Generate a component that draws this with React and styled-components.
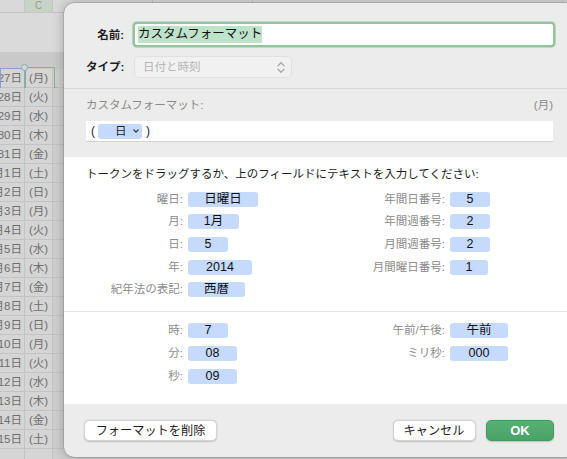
import React from "react";
import styled, { createGlobalStyle } from "styled-components";

const GlobalStyle = createGlobalStyle`
  html, body { margin: 0; padding: 0; width: 567px; height: 459px; overflow: hidden; }
  body { font-family: "Liberation Sans", "Noto Sans CJK JP", sans-serif; }
  * { box-sizing: border-box; }
`;

const Screen = styled.div`
  position: relative;
  width: 567px;
  height: 459px;
  overflow: hidden;
  background: #d4d4d4;
`;

/* ---------- spreadsheet behind ---------- */
const Sheet = styled.div`
  display: flex;
  flex-direction: column;
  width: 100%;
`;

const ColumnHeader = styled.div`
  display: flex;
  height: 13px;
  background: #d9d9d9;
  border-bottom: 1px solid #c6c6c6;
`;

const HeaderCell = styled.div`
  width: ${(p) => p.$w}px;
  flex: ${(p) => (p.$grow ? 1 : "none")};
  height: 100%;
  border-right: 1px solid #c6c6c6;
  background: ${(p) => (p.$active ? "#c8d3c8" : "transparent")};
  color: #909c90;
  font-size: 10px;
  line-height: 12px;
  text-align: center;
`;

const FormulaArea = styled.div`
  height: 39px;
  background: #dadada;
`;

const SheetBand = styled.div`
  height: 17px;
  background: #c9c9c9;
`;

const SheetRow = styled.div`
  position: relative;
  display: flex;
  height: 19px;
  border-bottom: 1px solid #c3c3c3;
  background: #d5d5d5;
`;

const DateCell = styled.div`
  width: 25px;
  height: 100%;
  border-right: 1px solid #c3c3c3;
  display: flex;
  justify-content: flex-end;
  align-items: center;
  overflow: hidden;
  padding-right: 2px;
  white-space: nowrap;
  color: #6e6e6e;
  font-size: 11.5px;
  line-height: 14px;
`;

const DayCell = styled.div`
  width: 28px;
  height: 100%;
  border-right: 1px solid #c3c3c3;
  display: flex;
  justify-content: center;
  align-items: center;
  color: #6e6e6e;
  font-size: 11.5px;
  line-height: 14px;
  white-space: nowrap;
`;

const RestCell = styled.div`
  flex: 1;
  background: #cfcfcf;
`;

const BlueFrame = styled.div`
  position: absolute;
  left: 0;
  top: -1px;
  width: 26px;
  height: 21px;
  border: 1.5px solid #8c9cd6;
  pointer-events: none;
`;

const GreenFrame = styled.div`
  position: absolute;
  left: 24px;
  top: -2px;
  width: 31px;
  height: 23px;
  border: 1.5px solid #86b686;
  pointer-events: none;
`;

const Handle = styled.span`
  position: absolute;
  width: 7px;
  height: 7px;
  border-radius: 50%;
  background: #d6d6d6;
  border: 1.3px solid #86b686;
  ${(p) => (p.$end ? "right: -4.5px; bottom: -4.5px;" : "left: -4.5px; top: -4.5px;")}
`;

/* ---------- dialog ---------- */
const Dialog = styled.div`
  position: absolute;
  left: 64px;
  top: 3px;
  width: 511px;
  height: 454px;
  border-radius: 10px;
  overflow: hidden;
  background: #ececec;
  box-shadow: 0 0 12px rgba(0, 0, 0, 0.28), 0 0 0 0.5px rgba(0, 0, 0, 0.2);
  display: flex;
  flex-direction: column;
  color: #1d1d1d;
`;

const TopSection = styled.div`
  padding: 21px 22px 10px 22px;
  display: flex;
  flex-direction: column;
  gap: 11px;
`;

const FormRow = styled.div`
  display: grid;
  grid-template-columns: 38px 1fr;
  column-gap: 11px;
  align-items: center;
`;

const FormLabel = styled.div`
  text-align: right;
  font-weight: bold;
  font-size: 11.5px;
  line-height: 14px;
  white-space: nowrap;
  color: #1f1f1f;
`;

const NameInput = styled.div`
  height: 21px;
  background: #fff;
  border-radius: 2px;
  box-shadow: 0 0 0 2.6px #93c59c;
  padding-left: 3px;
  display: flex;
  align-items: center;
`;

const Selected = styled.span`
  background: #bfe2cb;
  font-size: 12.5px;
  line-height: 16.5px;
  color: #111;
`;

const Popup = styled.div`
  width: 158px;
  height: 22px;
  margin-left: -1px;
  border-radius: 5px;
  background: #f1f1f1;
  border: 1px solid #e0e0e0;
  padding: 0 6px 0 8px;
  display: flex;
  align-items: center;
  justify-content: space-between;
  color: #b6b6b6;
  font-size: 11.5px;
  line-height: 14px;
`;

const Divider = styled.div`
  height: 1px;
  background: ${(p) => p.$color || "#d7d7d7"};
  flex: none;
`;

const CustomSection = styled.div`
  padding: 9px 22px 15px 22px;
  display: flex;
  flex-direction: column;
  gap: 9px;
`;

const CaptionLine = styled.div`
  display: flex;
  justify-content: space-between;
  font-size: 11.5px;
  line-height: 14px;
  color: #8a8a8a;
`;

const FormatField = styled.div`
  height: 21px;
  background: #fff;
  border-bottom: 1px solid #d3d3d3;
  display: flex;
  align-items: center;
  padding-left: 5px;
  font-size: 12px;
  line-height: 14px;
  color: #222;
`;

const FieldToken = styled.span`
  width: 44px;
  height: 15px;
  margin: 0 4px 0 3px;
  border-radius: 3px;
  background: #c4dafc;
  display: flex;
  align-items: center;
  gap: 6px;
  padding-left: 17px;
  font-size: 11.5px;
  color: #222;
`;

const WhiteSection = styled.div`
  background: #fff;
  display: flex;
  flex-direction: column;
  padding-bottom: 20px;
`;

const Instruction = styled.div`
  padding: 10px 22px 0 22px;
  font-size: 11.5px;
  line-height: 14px;
  color: #1d1d1d;
  white-space: nowrap;
`;

const TokenGrid = styled.div`
  margin-top: ${(p) => p.$top}px;
  padding-left: 22px;
  display: grid;
  grid-template-columns: 97px 150px 102px auto;
  column-gap: 5px;
  row-gap: 7.7px;
  grid-auto-rows: 15px;
  align-items: center;
`;

const TokenLabel = styled.div`
  text-align: right;
  font-size: 11.5px;
  line-height: 15px;
  color: #8b8b8b;
  white-space: nowrap;
`;

const Token = styled.div`
  justify-self: start;
  width: ${(p) => p.$w}px;
  height: 15px;
  border-radius: 3px;
  background: #c5dafc;
  text-align: center;
  font-size: 12.5px;
  line-height: 15px;
  color: #111;
  white-space: nowrap;
`;

const Spacer = styled.div``;

const Footer = styled.div`
  flex: 1;
  padding: 16.5px 21px 0 20px;
  display: flex;
  align-items: flex-start;
  gap: 10.5px;
`;

const Button = styled.button`
  height: 21px;
  width: ${(p) => p.$w}px;
  margin-right: ${(p) => (p.$push ? "auto" : "0")};
  border-radius: 5px;
  border: 0.5px solid ${(p) => (p.$primary ? "#3f9a5c" : "#d2d2d2")};
  background: ${(p) => (p.$primary ? "linear-gradient(#57b074, #4aa268)" : "#fff")};
  box-shadow: 0 0.5px 1.5px rgba(0, 0, 0, 0.18);
  color: ${(p) => (p.$primary ? "#fff" : "#1d1d1d")};
  font-family: inherit;
  font-size: ${(p) => (p.$primary ? "13px" : "12.2px")};
  font-weight: ${(p) => (p.$primary ? "bold" : "normal")};
  line-height: 14px;
  padding: 0;
  display: flex;
  align-items: center;
  justify-content: center;
`;

const UpDownChevron = () => (
  <svg width="8" height="13" viewBox="0 0 8 13" fill="none">
    <path d="M1 4.8 L4 1.8 L7 4.8" stroke="#a9a9a9" strokeWidth="1.3" strokeLinecap="round" strokeLinejoin="round" />
    <path d="M1 8.2 L4 11.2 L7 8.2" stroke="#a9a9a9" strokeWidth="1.3" strokeLinecap="round" strokeLinejoin="round" />
  </svg>
);

const DownChevron = () => (
  <svg width="6" height="4" viewBox="0 0 6 4" fill="none">
    <path d="M0.8 0.8 L3 3 L5.2 0.8" stroke="#333" strokeWidth="1.2" strokeLinecap="round" strokeLinejoin="round" />
  </svg>
);

const rowsData = [
  ["1月27日", "(月)"], ["1月28日", "(火)"], ["1月29日", "(水)"], ["1月30日", "(木)"],
  ["1月31日", "(金)"], ["2月1日", "(土)"], ["2月2日", "(日)"], ["2月3日", "(月)"],
  ["2月4日", "(火)"], ["2月5日", "(水)"], ["2月6日", "(木)"], ["2月7日", "(金)"],
  ["2月8日", "(土)"], ["2月9日", "(日)"], ["2月10日", "(月)"], ["2月11日", "(火)"],
  ["2月12日", "(水)"], ["2月13日", "(木)"], ["2月14日", "(金)"], ["2月15日", "(土)"],
  ["", ""],
];

const dateTokens = [
  [["曜日:", "日曜日", 70], ["年間日番号:", "5", 40]],
  [["月:", "1月", 51], ["年間週番号:", "2", 40]],
  [["日:", "5", 40], ["月間週番号:", "2", 40]],
  [["年:", "2014", 64], ["月間曜日番号:", "1", 38]],
  [["紀年法の表記:", "西暦", 57], null],
];

const timeTokens = [
  [["時:", "7", 40], ["午前/午後:", "午前", 58]],
  [["分:", "08", 49], ["ミリ秒:", "000", 58]],
  [["秒:", "09", 49], null],
];

const renderGrid = (rows) =>
  rows.flatMap((row, i) =>
    row.flatMap((cell, j) =>
      cell
        ? [
            <TokenLabel key={`l${i}${j}`}>{cell[0]}</TokenLabel>,
            <Token key={`t${i}${j}`} $w={cell[2]}>{cell[1]}</Token>,
          ]
        : [<Spacer key={`s${i}${j}a`} />, <Spacer key={`s${i}${j}b`} />]
    )
  );

export default function App() {
  return (
    <Screen>
      <GlobalStyle />
      <Sheet>
        <ColumnHeader>
          <HeaderCell $w={25} />
          <HeaderCell $w={28} $active>C</HeaderCell>
          <HeaderCell $w={100} />
          <HeaderCell $w={100} />
          <HeaderCell $grow />
        </ColumnHeader>
        <FormulaArea />
        <SheetBand />
        {rowsData.map(([d, w], i) => (
          <SheetRow key={i}>
            <DateCell>{d}</DateCell>
            <DayCell>{w}</DayCell>
            <RestCell />
            {i === 0 && (
              <>
                <BlueFrame />
                <GreenFrame>
                  <Handle />
                  <Handle $end />
                </GreenFrame>
              </>
            )}
          </SheetRow>
        ))}
      </Sheet>

      <Dialog>
        <TopSection>
          <FormRow>
            <FormLabel>名前:</FormLabel>
            <NameInput>
              <Selected>カスタムフォーマット</Selected>
            </NameInput>
          </FormRow>
          <FormRow>
            <FormLabel>タイプ:</FormLabel>
            <Popup>
              <span>日付と時刻</span>
              <UpDownChevron />
            </Popup>
          </FormRow>
        </TopSection>
        <Divider />
        <CustomSection>
          <CaptionLine>
            <span>カスタムフォーマット:</span>
            <span>(月)</span>
          </CaptionLine>
          <FormatField>
            <span>(</span>
            <FieldToken>
              <span>日</span>
              <DownChevron />
            </FieldToken>
            <span>)</span>
          </FormatField>
        </CustomSection>
        <WhiteSection>
          <Instruction>トークンをドラッグするか、上のフィールドにテキストを入力してください:</Instruction>
          <TokenGrid $top={10.7}>{renderGrid(dateTokens)}</TokenGrid>
          <Divider $color="#e6e6e6" style={{ marginTop: 14 }} />
          <TokenGrid $top={11}>{renderGrid(timeTokens)}</TokenGrid>
        </WhiteSection>
        <Footer>
          <Button $w={133} $push>フォーマットを削除</Button>
          <Button $w={83}>キャンセル</Button>
          <Button $w={68} $primary>OK</Button>
        </Footer>
      </Dialog>
    </Screen>
  );
}
